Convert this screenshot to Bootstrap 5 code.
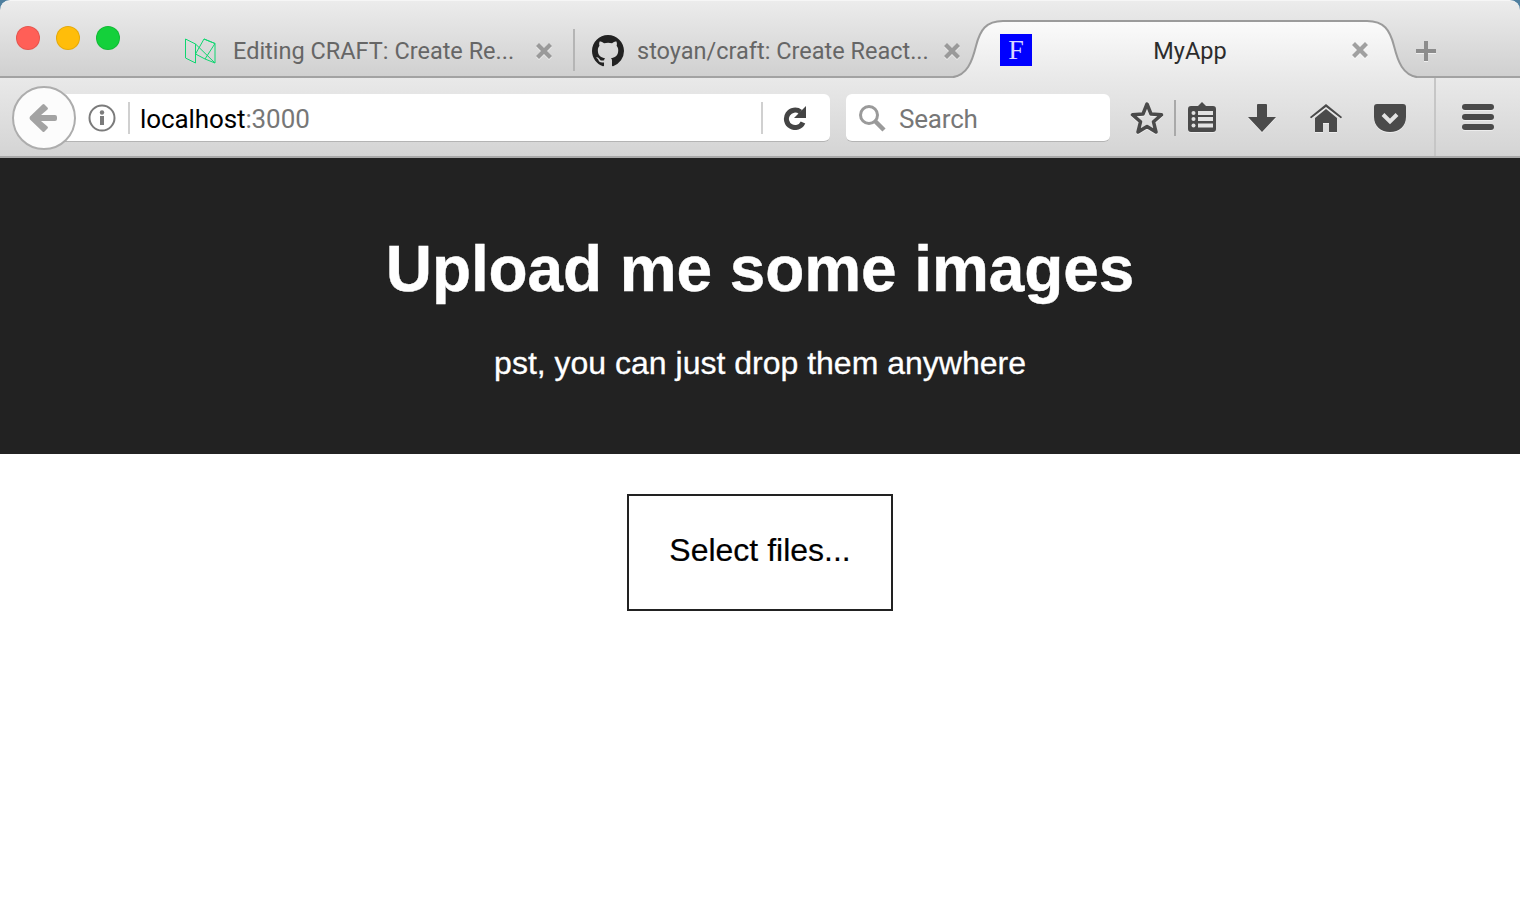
<!DOCTYPE html>
<html lang="en">
<head>
<meta charset="utf-8">
<title>MyApp</title>
<link rel="stylesheet" href="https://cdn.jsdelivr.net/npm/bootstrap@5.3.0/dist/css/bootstrap.min.css">
<style>
html,body{height:100%;background:#fff;}
body{font-family:"Liberation Sans",Arial,sans-serif;}
.shell{background:#4f7f9f;}
.noshrink{flex:none;}
.tabbar{height:78px;background:linear-gradient(#ececec,#d0d0d0);border-top-left-radius:10px;border-top-right-radius:10px;border-top:1px solid #f6f6f6;border-bottom:2px solid #a2a2a2;padding-left:16px;font:23.5px/1 Roboto,sans-serif;color:#666;}
.lights{gap:16px;width:169px;margin-top:25px;}
.lamp{width:24px;height:24px;border-radius:50%;border:1px solid rgba(0,0,0,.1);}
.lamp-red{background:#ff5f57;}
.lamp-amber{background:#ffbd0a;}
.lamp-green{background:#14d03b;}
.tabitem{height:75px;padding-top:25px;}
.tab-a{width:388px;}
.tab-b{width:380px;}
.tabsep{width:2px;height:42px;background:#b5b5b5;align-self:flex-start;margin-top:3px;flex:none;}
.tabtext{white-space:nowrap;padding-top:2px;}
.fav-a{width:32px;height:26px;margin-right:16px;flex:none;}
.fav-b{width:32px;height:32px;margin:0 13px 0 17px;flex:none;}
.xmark{width:16px;height:16px;flex:none;filter:drop-shadow(0 1px 0 rgba(255,255,255,.6));}
.tab-a .xmark{margin-left:22px;}
.tab-b .xmark{margin-left:15px;}
.tab-live{width:464px;height:58px;margin-top:19px;position:relative;color:#2c2c2c;}
.tabshape{position:absolute;left:0;top:0;}
.tab-inner{position:relative;height:58px;padding:14px 49px 0 47px;}
.livefav{width:32px;height:32px;background:#00f;color:#d8d8ff;font:28px/32px "Liberation Serif",serif;text-align:center;flex:none;}
.livename{padding:6px 4px 0 0;}
.livex{margin-top:8px;}
.plus{width:22px;height:22px;margin-left:-2px;margin-top:39px;flex:none;filter:drop-shadow(0 1px 0 rgba(255,255,255,.6));}
.toolbar{height:80px;background:linear-gradient(#e9e9e9,#d4d4d4);border-bottom:2px solid #a9a9a9;padding-left:12px;}
.backbtn{width:64px;height:64px;border-radius:50%;background:#fcfcfc;border:2px solid #adadad;position:relative;z-index:2;margin-top:8px;flex:none;padding-right:3px;}
.urlbar{height:48px;width:770px;margin-left:-16px;margin-top:16px;background:#fff;border-radius:0 6px 6px 0;border-bottom:1px solid #b4b4b4;padding-left:28px;flex:none;font:26px/1 Roboto,sans-serif;}
.sep-v{width:2px;height:32px;background:#d0d0d0;flex:none;}
.sep-first{margin-left:12px;}
.urltext{color:#000;margin:2px 0 0 10px;letter-spacing:-.1px;flex:1;}
.urltext span{color:#777;}
.searchbar{height:48px;width:264px;margin:16px 0 0 16px;background:#fff;border-radius:6px;border-bottom:1px solid #b4b4b4;padding-left:12px;color:#777;font:26px/1 Roboto,sans-serif;flex:none;}
.searchlabel{margin:2px 0 0 13px;letter-spacing:-.2px;}
.tool{flex:none;display:block;}
.ico{filter:drop-shadow(0 1px 0 rgba(255,255,255,.5));}
.t-reload{margin:0 23px 0 20px;}
.t-star{margin:23px 0 0 20px;}
.sep-dark{height:36px;margin:22px 0 0 10px;background:#a9a9a9;}
.t-clip{margin:24px 0 0 12px;}
.t-down{margin:26px 0 0 32px;}
.t-home{margin:26px 0 0 34px;}
.t-pocket{margin:26px 0 0 32px;}
.hamb{border-left:2px solid #c6c6c6;height:78px;width:85px;flex:none;margin-left:28px;padding:26px 25px 0 0;}
.hero{height:296px;background:#222;color:#fff;padding-top:73px;}
.hero h1{font:bold 64px/76px "Liberation Sans",Arial,sans-serif;margin:0;letter-spacing:-.1px;-webkit-text-stroke:.4px #fff;}
.hero p{font:32px/38px "Liberation Sans",Arial,sans-serif;margin:37px 0 0;-webkit-text-stroke:.3px #fff;}
.picker{width:266px;height:117px;margin-top:40px;border:2px solid #222;border-radius:0;background:#fff;color:#000;font:32px/1 "Liberation Sans",Arial,sans-serif;padding:0 0 6px;-webkit-text-stroke:.2px #000;}
</style>
</head>
<body>
<div class="shell">
  <div class="tabbar d-flex">
    <div class="lights d-flex noshrink">
      <div class="lamp lamp-red"></div>
      <div class="lamp lamp-amber"></div>
      <div class="lamp lamp-green"></div>
    </div>
    <div class="tabitem tab-a d-flex align-items-center noshrink">
      <svg class="fav-a" viewBox="0 0 32 26" fill="none" stroke="#0fd670" stroke-width="1"><path d="M.5 1 10.500 6V25L.5 20Z"/><path d="M10.500 6 30 25V5.500L19 1 10.500 16 20 21 30 25"/><path d="M19 1 30 5.500 20 21"/></svg>
      <span class="tabtext">Editing CRAFT: Create Re...</span>
      <svg class="xmark" viewBox="0 0 16 16"><path d="M0 3 3 0 8 5 13 0 16 3 11 8 16 13 13 16 8 11 3 16 0 13 5 8Z" fill="#9a9a9a"/></svg>
    </div>
    <div class="tabitem tab-b d-flex align-items-center noshrink">
      <div class="tabsep"></div>
      <svg class="fav-b" viewBox="0 0 16 16"><path fill="#222" d="M8 0C3.58 0 0 3.58 0 8c0 3.54 2.29 6.53 5.470 7.590.4.07.55-.17.55-.38 0-.19-.01-.82-.01-1.490-2.010.37-2.530-.49-2.690-.94-.09-.23-.48-.94-.82-1.130-.28-.15-.68-.52-.01-.53.63-.01 1.080.58 1.230.82.72 1.210 1.870.87 2.330.66.07-.52.28-.87.51-1.070-1.780-.2-3.640-.89-3.640-3.950 0-.87.31-1.590.82-2.150-.08-.2-.36-1.020.08-2.120 0 0 .67-.21 2.200.82.64-.18 1.320-.27 2-.27s1.360.09 2 .27c1.530-1.040 2.200-.82 2.200-.82.44 1.100.16 1.920.08 2.120.51.56.82 1.270.82 2.150 0 3.070-1.870 3.750-3.650 3.950.29.25.54.73.54 1.480 0 1.070-.01 1.930-.01 2.200 0 .21.15.46.55.38A8.010 8.010 0 0 0 16 8c0-4.420-3.580-8-8-8z"/></svg>
      <span class="tabtext">stoyan/craft: Create React...</span>
      <svg class="xmark" viewBox="0 0 16 16"><path d="M0 3 3 0 8 5 13 0 16 3 11 8 16 13 13 16 8 11 3 16 0 13 5 8Z" fill="#9a9a9a"/></svg>
    </div>
    <div class="tab-live noshrink">
      <svg class="tabshape" width="464" height="59" viewBox="0 0 464 59"><defs><linearGradient id="lg" x1="0" y1="0" x2="0" y2="1"><stop offset="0" stop-color="#fbfbfb"/><stop offset="1" stop-color="#e9e9e9"/></linearGradient></defs><path d="M0 58C14 55 19 42 23 26 27 10 33 1 50 1H414C431 1 437 10 441 26 445 42 450 55 464 58Z" fill="url(#lg)"/><path d="M0 57C14 55 19 42 23 26 27 10 33 1 50 1H414C431 1 437 10 441 26 445 42 450 55 464 57" fill="none" stroke="#9b9b9b" stroke-width="2"/></svg>
      <div class="tab-inner d-flex align-items-start">
        <div class="livefav">F</div>
        <div class="livename flex-grow-1 text-center">MyApp</div>
        <svg class="xmark livex" viewBox="0 0 16 16"><path d="M0 3 3 0 8 5 13 0 16 3 11 8 16 13 13 16 8 11 3 16 0 13 5 8Z" fill="#a0a0a0"/></svg>
      </div>
    </div>
    <svg class="plus" viewBox="0 0 22 22"><path d="M9 1h4v8h8v4h-8v8H9v-8H1V9h8Z" fill="#8c8c8c"/></svg>
  </div>
  <div class="toolbar d-flex">
    <div class="backbtn d-flex align-items-center justify-content-center">
      <svg width="28" height="30" viewBox="0 0 28 30"><path d="M13.500 1.500Q14.500.5 15.500 1.500L18.500 4.500Q19.500 5.500 18.500 6.500L12 12H26Q28 12 28 14V16Q28 18 26 18H12L18.500 23.500Q19.500 24.500 18.500 25.500L15.500 28.500Q14.500 29.500 13.500 28.500L1 16.500Q0 15 1 13.500Z" fill="#a3a3a3"/></svg>
    </div>
    <div class="urlbar d-flex align-items-center">
      <svg width="28" height="28" viewBox="0 0 28 28" class="tool"><circle cx="14" cy="14" r="12.500" fill="none" stroke="#7b7b7b" stroke-width="2"/><rect x="12" y="12" width="4" height="9" fill="#7b7b7b"/><circle cx="14" cy="8.500" r="2.200" fill="#7b7b7b"/></svg>
      <div class="sep-v sep-first"></div>
      <div class="urltext">localhost<span>:3000</span></div>
      <div class="sep-v"></div>
      <svg class="tool ico t-reload" width="24" height="24" viewBox="0 0 24 24"><path d="M20 16.500A8.700 8.700 0 1 1 17.500 6" fill="none" stroke="#444" stroke-width="5"/><path d="M23 0V12H11Z" fill="#444"/></svg>
    </div>
    <div class="searchbar d-flex align-items-center">
      <svg class="tool" width="28" height="28" viewBox="0 0 28 28"><circle cx="11" cy="11" r="8.500" fill="none" stroke="#9a9a9a" stroke-width="3"/><path d="M17 17 26 26" stroke="#9a9a9a" stroke-width="4.500" fill="none"/></svg>
      <span class="searchlabel">Search</span>
    </div>
    <svg class="tool ico t-star" width="34" height="34" viewBox="0 0 34 34"><path d="M17 3 21 13 31.500 13.800 23.500 20.800 26 31 17 25.500 8 31 10.500 20.800 2.500 13.800 13 13Z" fill="none" stroke="#4a4a4a" stroke-width="3.500" stroke-linejoin="round"/></svg>
    <div class="sep-v sep-dark"></div>
    <svg class="tool ico t-clip" width="28" height="30" viewBox="0 0 28 30"><path d="M3 4H10L14 0 18 4H25Q28 4 28 7V27Q28 30 25 30H3Q0 30 0 27V7Q0 4 3 4Z" fill="#4a4a4a"/><g fill="#e2e2e2"><circle cx="5.500" cy="11" r="2"/><circle cx="5.500" cy="17" r="2"/><circle cx="5.500" cy="23.500" r="2"/><rect x="10" y="9" width="15" height="4"/><rect x="10" y="15" width="15" height="4"/><rect x="10" y="21.500" width="15" height="4"/></g></svg>
    <svg class="tool ico t-down" width="28" height="28" viewBox="0 0 28 28"><path d="M9 1Q9 0 10 0H18Q19 0 19 1V13H28L14 28 0 13H9Z" fill="#4a4a4a"/></svg>
    <svg class="tool ico t-home" width="32" height="28" viewBox="0 0 32 28"><path d="M16 0 32 13 31 14.500 16 3 1 14.500 0 13Z" fill="#4a4a4a"/><path d="M16 5 27 14V28H19V19H13V28H5V14Z" fill="#4a4a4a"/></svg>
    <svg class="tool ico t-pocket" width="32" height="28" viewBox="0 0 32 28"><path d="M3 0H29Q32 0 32 3V13C32 22 25 28 16 28S0 22 0 13V3Q0 0 3 0Z" fill="#4a4a4a"/><path d="M9 10.500 16 17.500 23 10.500" fill="none" stroke="#e2e2e2" stroke-width="4"/></svg>
    <div class="hamb d-flex align-items-start justify-content-end">
      <svg class="tool ico" width="32" height="26" viewBox="0 0 32 26"><g fill="#4a4a4a"><rect width="32" height="6" rx="3"/><rect y="10" width="32" height="6" rx="3"/><rect y="20" width="32" height="6" rx="3"/></g></svg>
    </div>
  </div>
</div>
<header class="hero text-center">
  <h1>Upload me some images</h1>
  <p>pst, you can just drop them anywhere</p>
</header>
<main class="text-center">
  <button type="button" class="btn picker">Select files...</button>
</main>
</body>
</html>
